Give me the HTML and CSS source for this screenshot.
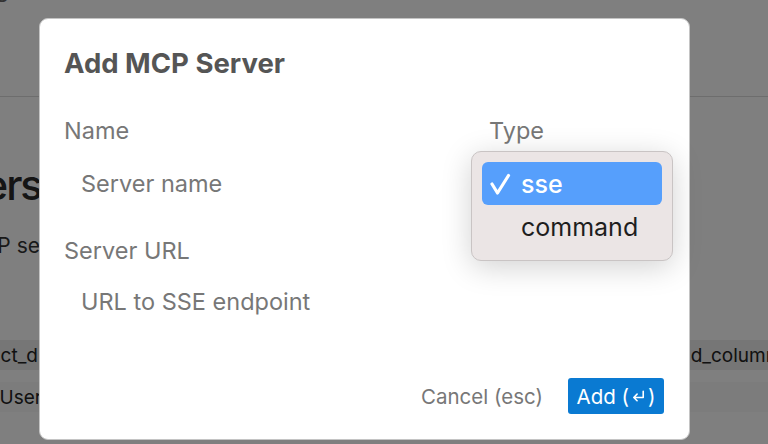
FILE: index.html
```html
<!DOCTYPE html>
<html>
<head>
<meta charset="utf-8">
<link rel="stylesheet" href="styles.css">
</head>
<body>
<div class="page">
  <div class="topbar"><span class="crumb">Settings</span></div>
  <div class="content">
    <div class="clip title-row"><h1 class="title">MCP Servers</h1></div>
    <div class="clip desc-row"><p class="desc">MCP se</p></div>
    <div class="table">
      <div class="row dark">
        <div class="clip cell-clip"><span class="cell-left">product_d</span></div>
        <span class="cell-right">d_columns</span>
      </div>
      <div class="row">
        <div class="clip cell-clip"><span class="cell-left">Users</span></div>
      </div>
    </div>
  </div>
</div>
<div class="overlay"></div>
<div class="modal">
  <h2 class="modal-title">Add MCP Server</h2>
  <div class="form">
    <div class="col-main">
      <label class="label">Name</label>
      <div class="input">Server name</div>
      <label class="label url-label">Server URL</label>
      <div class="input input-url">URL to SSE endpoint</div>
    </div>
    <div class="col-type">
      <label class="label">Type</label>
      <div class="menu">
        <div class="option selected"><svg class="check" viewBox="0 0 22 24" width="22" height="24"><path d="M3 12l5.5 9L19.5 3.5" fill="none" stroke="#fff" stroke-width="3.2" stroke-linecap="round" stroke-linejoin="round"/></svg>sse</div>
        <div class="option">command</div>
      </div>
    </div>
  </div>
  <div class="actions">
    <button class="btn-cancel">Cancel (esc)</button>
    <button class="btn-add">Add (<svg class="enter" viewBox="0 0 18 18" width="17" height="17"><path d="M14 3.5v6.5H4M7.5 6.5L4 10l3.5 3.5" fill="none" stroke="#fff" stroke-width="1.7" stroke-linecap="round" stroke-linejoin="round"/></svg>)</button>
  </div>
</div>
</body>
</html>
```
FILE: styles.css
```css
* { box-sizing: border-box; }
html, body { margin: 0; padding: 0; }
body {
  width: 768px;
  height: 444px;
  overflow: hidden;
  font-family: Inter, "Noto Sans", "Liberation Sans", sans-serif;
  background: #ffffff;
  position: relative;
}
.page { width: 768px; height: 444px; }
.topbar {
  height: 97px;
  border-bottom: 1px solid #dadada;
  position: relative;
}
.crumb {
  position: absolute;
  top: -19px;
  left: -76px;
  font-size: 22px;
  color: #666;
}
.clip {
  width: 40px;
  display: flex;
  justify-content: flex-end;
  white-space: nowrap;
}
.title-row { margin-top: 59px; height: 58px; align-items: center; width: 41px; }
.title {
  margin: 0;
  font-size: 42px;
  font-weight: 500;
  letter-spacing: -2px;
  color: #2a2a2a;
  line-height: 58px;
}
.desc-row { margin-top: 17px; height: 30px; align-items: center; width: 40px; }
.desc {
  margin: 0;
  font-size: 21px;
  color: #333;
  line-height: 30px;
}
.table { margin-top: 79px; }
.row {
  height: 30px;
  display: flex;
  align-items: center;
  justify-content: space-between;
  font-size: 19px;
  color: #222;
  margin-bottom: 12px;
  background: #f8f8f8;
}
.row.dark { background: #ececec; }
.cell-clip { width: 38px; }
.row:not(.dark) .cell-clip { width: 52px; }
.cell-right { margin-right: -19px; }
.overlay {
  position: absolute;
  inset: 0;
  background: rgba(0,0,0,0.5);
}
.modal {
  position: absolute;
  left: 39px;
  top: 18px;
  width: 651px;
  height: 422px;
  background: #fff;
  border-radius: 9px;
  border: 1px solid #c4c4c4;
  padding: 26px 25px 0 24px;
  display: flex;
  flex-direction: column;
}
.modal-title {
  margin: 0;
  font-size: 27.5px;
  font-weight: 700;
  color: #555;
  line-height: 36px;
}
.form {
  display: flex;
  margin-top: 33px;
}
.col-main { width: 425px; display: flex; flex-direction: column; }
.col-type { position: relative; flex: 1; }
.label {
  display: block;
  font-size: 23.5px;
  color: #777;
  line-height: 34px;
}
.input {
  font-size: 23.5px;
  color: #777;
  line-height: 34px;
  padding: 0 17px;
  margin-top: 19px;
}
.url-label { margin-top: 33px; }
.input.input-url { margin-top: 17px; }
.menu {
  position: absolute;
  left: -18px;
  top: 37px;
  width: 202px;
  height: 110px;
  background: #ebe5e5;
  border: 1px solid #c9c4c4;
  border-radius: 10px;
  padding: 10px;
  box-shadow: 0 6px 30px rgba(0,0,0,0.18);
}
.option {
  height: 44px;
  border-radius: 6px;
  font-size: 25px;
  color: #1e1e1e;
  display: flex;
  align-items: center;
  padding-left: 39px;
  position: relative;
}
.option.selected {
  height: 43px;
  background: #569ffc;
  color: #fff;
  font-weight: 500;
}
.check {
  position: absolute;
  left: 7px;
  top: 10px;
}
.actions {
  margin-top: auto;
  margin-bottom: 25px;
  display: flex;
  justify-content: flex-end;
  align-items: center;
  gap: 25px;
}
.btn-cancel {
  background: none;
  border: none;
  font-family: inherit;
  font-size: 20.5px;
  color: #777;
  padding: 0;
}
.btn-add {
  background: #0a7ad2;
  color: #fff;
  border: none;
  border-radius: 3px;
  font-family: inherit;
  font-size: 20.5px;
  height: 36px;
  width: 96px;
  display: flex;
  align-items: center;
  justify-content: center;
  padding: 0;
}
.enter { margin: 0 1px; }
```
